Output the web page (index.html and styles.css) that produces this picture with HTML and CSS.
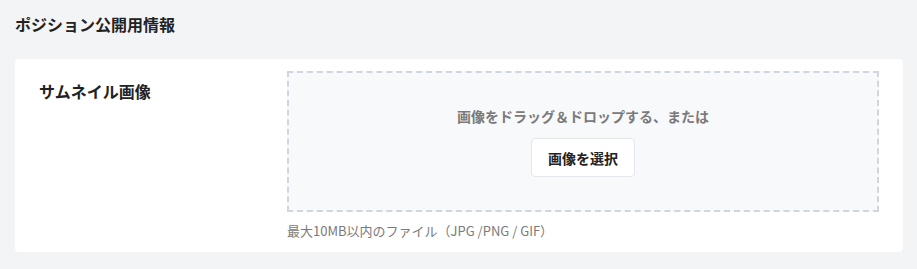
FILE: index.html
```html
<!DOCTYPE html>
<html lang="ja">
<head>
<meta charset="utf-8">
<link rel="stylesheet" href="styles.css">
</head>
<body>
<main class="page">
  <h2 class="section-title">ポジション公開用情報</h2>
  <section class="card">
    <div class="field">
      <div class="field-label">サムネイル画像</div>
      <div class="field-body">
        <div class="dropzone">
          <p class="drop-text">画像をドラッグ＆ドロップする、または</p>
          <button class="select-btn" type="button">画像を選択</button>
        </div>
        <p class="note">最大10MB以内のファイル（JPG /PNG / GIF）</p>
      </div>
    </div>
  </section>
</main>
</body>
</html>
```
FILE: styles.css
```css
html, body {
  margin: 0;
  padding: 0;
  background: #f3f4f6;
}
body {
  font-family: "Noto Sans CJK JP", "Noto Sans", sans-serif;
  color: #222222;
}
.page {
  padding: 12px 14px 0 15px;
}
.section-title {
  margin: 0 0 23px;
  font-size: 16px;
  line-height: 24px;
  font-weight: 700;
  color: #222222;
}
.card {
  background: #ffffff;
  border-radius: 4px;
  padding: 12px 24px 12px 24px;
}
.field {
  display: grid;
  grid-template-columns: 248px 1fr;
}
.field-label {
  font-size: 16px;
  line-height: 24px;
  font-weight: 700;
  padding-top: 8px;
  color: #222222;
}
.dropzone {
  border: 2px dashed #cfd6df;
  background: #f8f9fb;
  padding: 33px 16px 33px;
  display: flex;
  flex-direction: column;
  align-items: center;
  gap: 12px;
}
.drop-text {
  margin: 0;
  font-size: 14px;
  line-height: 20px;
  font-weight: 700;
  color: #7a7a7a;
}
.select-btn {
  font-family: inherit;
  width: 104px;
  height: 39px;
  background: #ffffff;
  border: 1px solid #e3e6ea;
  border-radius: 4px;
  font-size: 14px;
  font-weight: 700;
  color: #222222;
  padding: 0;
}
.note {
  margin: 9px 0 0;
  font-size: 13px;
  line-height: 19px;
  color: #7a7a7a;
}
```
